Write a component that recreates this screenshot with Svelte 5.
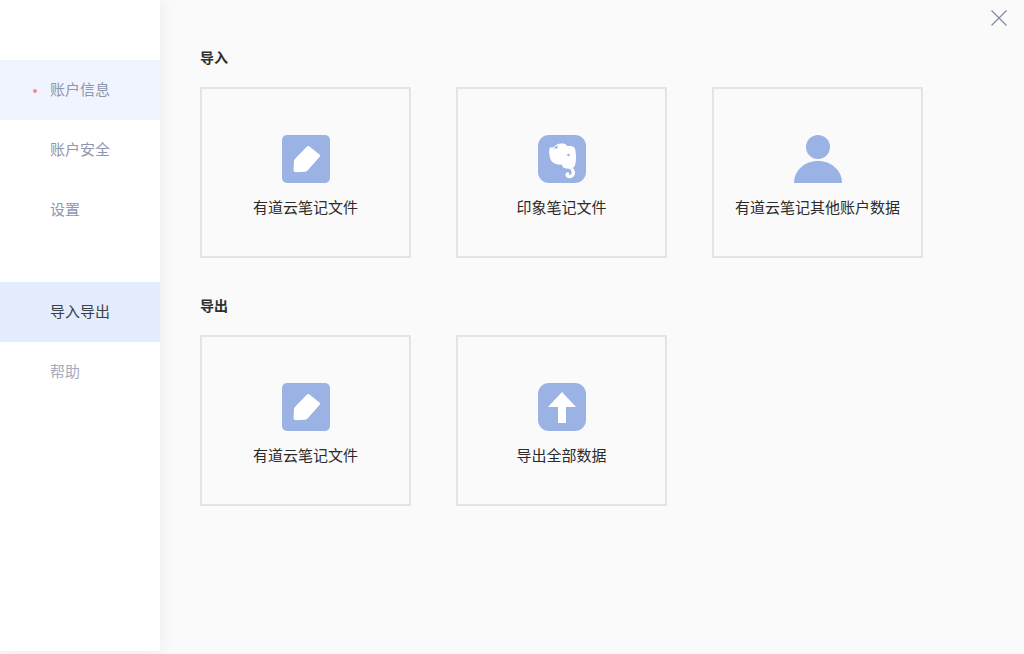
<script>
  const nav1 = [
    { label: '账户信息', active: true, dot: true },
    { label: '账户安全' },
    { label: '设置' }
  ];
  const nav2 = [
    { label: '导入导出', current: true },
    { label: '帮助', muted: true }
  ];
  const sections = [
    { title: '导入', cards: [
      { icon: 'pen', label: '有道云笔记文件' },
      { icon: 'elephant', label: '印象笔记文件' },
      { icon: 'user', label: '有道云笔记其他账户数据' }
    ] },
    { title: '导出', cards: [
      { icon: 'pen', label: '有道云笔记文件' },
      { icon: 'up', label: '导出全部数据' }
    ] }
  ];
</script>

<div class="page">
  <aside class="side">
    <nav class="group first">
      {#each nav1 as n}
        <div class="item" class:active={n.active}>
          {#if n.dot}<span class="dot"></span>{/if}
          {n.label}
        </div>
      {/each}
    </nav>
    <nav class="group second">
      {#each nav2 as n}
        <div class="item" class:current={n.current} class:muted={n.muted}>{n.label}</div>
      {/each}
    </nav>
  </aside>

  <main class="main">
    <svg class="close" width="16" height="16" viewBox="0 0 16 16" aria-hidden="true">
      <path d="M0.5 0.5L15.5 15.5M15.5 0.5L0.5 15.5" stroke="#7f8ba0" stroke-width="1.2" fill="none"/>
    </svg>
    {#each sections as s}
      <section class="section">
        <h2>{s.title}</h2>
        <div class="cards">
          {#each s.cards as c}
            <div class="card">
              <svg class="icon" width="48" height="48" viewBox="0 0 48 48" aria-hidden="true">
                {#if c.icon === 'pen'}
                  <rect width="48" height="48" rx="5" fill="#9bb2e5"/>
                  <path d="M25 11.5c.8-.7 1.8-.7 2.5 0l10 8c.8.7.8 1.7 0 2.500L25 36c-.6.6-1.200.8-2 .8l-9 .4c-1.500 0-2.500-1-2.500-2.500L12 26c0-.8.300-1.500.9-2z" fill="#fff"/>
                {:else if c.icon === 'elephant'}
                  <rect width="48" height="48" rx="11" fill="#9bb2e5"/>
                  <path d="M15 12.500l4.500-3.500c2-.6 5-.8 7-.2 1.500.4 2 1.400 2.500 2.200 3-.2 6 .2 7.300 1.500 1.500 2 2 9 1.500 14-.4 4-1.500 5.500-3.300 6.500 1.800 1 2.800 3 2.500 5.500-.4 3-3 5-6 4.800-2.500-.2-3.800-2-3.500-4 .2-1.600 1.800-2.500 3-1.800 1 .6 1 1.800.2 2.500 1.500.3 3-.8 3-2.600 0-2.200-1.800-3.700-4.500-3.800-4-.1-5-2-5.500-4-3 .5-6.500-.2-9-2.300-3-2.500-3.500-8-3.500-11.500 0-1.600.3-2.300 1-3.300z" fill="#fff"/>
                  <path d="M15.500 13.500l4-3.500v3.500z" fill="#9bb2e5"/>
                  <circle cx="30.500" cy="20" r="1.300" fill="#9bb2e5"/>
                {:else if c.icon === 'user'}
                  <circle cx="24" cy="12" r="12" fill="#9bb2e5"/>
                  <path d="M0 48C0 35 11 26 24 26s24 9 24 22z" fill="#9bb2e5"/>
                {:else}
                  <rect width="48" height="48" rx="11" fill="#9bb2e5"/>
                  <path d="M24 9L38 24H28V40H20V24H10z" fill="#fff"/>
                {/if}
              </svg>
              <div class="label">{c.label}</div>
            </div>
          {/each}
        </div>
      </section>
    {/each}
  </main>
</div>

<style>
  :global(body) {
    margin: 0;
    background: #fafafa;
  }
  .page {
    position: relative;
    display: flex;
    width: 1024px;
    height: 654px;
    overflow: hidden;
    background: #fafafa;
    font-family: "Liberation Sans", "Noto Sans CJK SC", sans-serif;
    font-size: 15px;
  }
  .side {
    width: 160px;
    height: 651px;
    flex: none;
    background: #fff;
    box-shadow: 0 0 14px rgba(60, 70, 90, 0.08);
  }
  .group.first { padding-top: 60px; }
  .group.second { padding-top: 42px; }
  .item {
    position: relative;
    height: 60px;
    line-height: 60px;
    padding-left: 50px;
    color: #8f96ae;
  }
  .item.active { background: #f0f4fe; }
  .item.current { background: #e4edfd; color: #3e4048; }
  .item.muted { color: #a6abbb; }
  .dot {
    position: absolute;
    left: 33px;
    top: 29px;
    width: 4px;
    height: 4px;
    border-radius: 50%;
    background: #ee8b96;
  }
  .main {
    position: relative;
    flex: 1;
    padding: 48px 0 0 40px;
  }
  .close {
    position: absolute;
    left: 831px;
    top: 10px;
  }
  .section { height: 248px; }
  h2 {
    margin: 0;
    height: 20px;
    line-height: 20px;
    font-size: 14px;
    font-weight: 700;
    color: #2e2e2e;
  }
  .cards {
    display: flex;
    gap: 45px;
    margin-top: 19px;
  }
  .card {
    box-sizing: border-box;
    width: 211px;
    height: 171px;
    border: 2px solid #e4e4e4;
    padding-top: 46px;
    display: flex;
    flex-direction: column;
    align-items: center;
  }
  .icon { display: block; }
  .label {
    margin-top: 14px;
    height: 22px;
    line-height: 22px;
    color: #2b2b2b;
  }
</style>
